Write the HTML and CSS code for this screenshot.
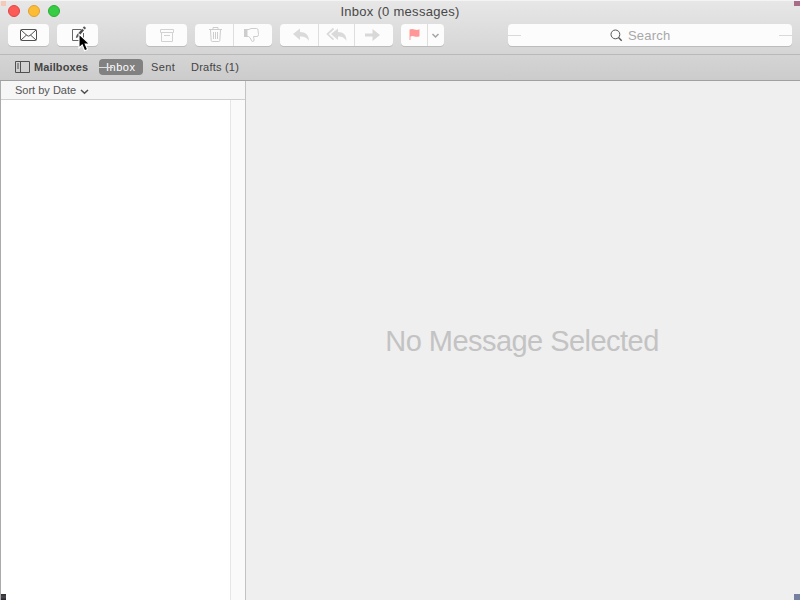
FILE: index.html
```html
<!DOCTYPE html>
<html lang="en">
<head>
<meta charset="utf-8">
<title>Inbox (0 messages)</title>
<link rel="stylesheet" href="styles.css">
</head>
<body>
<div class="window">
  <header class="chrome">
    <div class="titlebar">
      <div class="lights"><i class="light close"></i><i class="light minimize"></i><i class="light zoom"></i></div>
      <h1 class="title">Inbox (0 messages)</h1>
    </div>
    <div class="toolbar">
      <div class="group mail"><button class="btn"><svg width="41" height="22" viewBox="0 0 41 22" fill="none" stroke="#505050"><rect x="12.5" y="5.500" width="16" height="11" rx="1"/><path d="M13 6l6 5.500q1.500 1.200 3 0L28 6M13 16l5.500-5M28 16l-5.500-5"/></svg></button></div>
      <div class="group compose"><button class="btn"><svg width="41" height="22" viewBox="0 0 41 22" fill="none"><path d="M24 5.500h-8.500v11h11V9" stroke="#666"/><path d="M20.500 12l5.600-6.500" stroke="#4c4c4c" stroke-width="2.600"/><path d="M26.800 4.700l1.300-1.500" stroke="#555" stroke-width="2.600"/><path d="M18.800 14l.8-2.700 1.900 1.700z" fill="#4c4c4c"/></svg></button></div>
      <div class="group archive"><button class="btn"><svg width="41" height="22" viewBox="0 0 41 22" fill="none" stroke="#d2d2d2"><path d="M14.500 5.500h13v3h-13zM15.500 8.500v9h11v-9M18 11.500h6"/></svg></button></div>
      <div class="group trash"><button class="btn"><svg width="38" height="22" viewBox="0 0 38 22" fill="none" stroke="#cdcdcd"><path d="M14 5.500h13M18 5V3.500h5V5M15.500 6l.7 10.500q.1 1 1.100 1h6.400q1 0 1.100-1L25.500 6M18.500 8v7M20.500 8v7M22.500 8v7"/></svg></button><button class="btn"><svg width="38" height="22" viewBox="0 0 38 22" fill="none" stroke="#cdcdcd"><path d="M10 5h3.500v8H10z" fill="#cdcdcd" stroke="none"/><path d="M13 5.500h2l2-1h5.500q1.500 0 1.500 1.500l.5 4.500q0 2-1.500 2h-3.500q.5 2 .5 3.500 0 1.500-1.300 1.500-1 0-1.400-1.300-.8-2.700-2.800-3.700H13"/></svg></button></div>
      <div class="group reply"><button class="btn"><svg width="38" height="22" viewBox="0 0 38 22"><path fill="#dadada" d="M13 10l7-5.500v3.500c5.500 0 9 3 9 9-2-3.300-4.500-4.500-9-4.500V16z"/></svg></button><button class="btn"><svg width="35" height="22" viewBox="0 0 35 22"><path fill="#dadada" d="M12 10l7-5.500v3.500c5.500 0 8.500 3 8.500 9-2-3.300-4.200-4.500-8.500-4.500V16z"/><path d="M14.500 4.500L8.500 10l6 5.700" fill="none" stroke="#dadada" stroke-width="1.700"/></svg></button><button class="btn"><svg width="38" height="22" viewBox="0 0 38 22"><path fill="#d8d8d8" d="M10 9.500h7.500V5l7.500 6-7.500 6v-4.500h-7.500z"/></svg></button></div>
      <div class="group flag"><button class="btn"><svg width="26" height="22" viewBox="0 0 26 22"><path fill="#ff9797" d="M8.500 5.500q2.500-1 5 0t5-.3v7q-2.500 1-5 .2t-4 0V16h-1z"/></svg></button><button class="btn"><svg width="16" height="22" viewBox="0 0 16 22" fill="none" stroke="#a4a4a4" stroke-width="1.500"><path d="M4.500 10l3 3 3-3"/></svg></button></div>
      <div class="search"><svg width="13" height="13" viewBox="0 0 13 13" fill="none" stroke="#555"><circle cx="5.400" cy="5.400" r="4.400"/><path d="M8.500 8.500l3.200 3.200" stroke-width="1.400"/></svg><span class="placeholder">Search</span></div>
    </div>
    <nav class="favorites">
      <svg class="panel" width="15" height="12" viewBox="0 0 15 12" fill="none" stroke="#505050"><path d="M.5.500h14v11H.5zM5.500 1v10M2 3h2M2 5h2M2 7h2"/></svg>
      <span class="fav mailboxes">Mailboxes</span>
      <span class="fav inbox"><span class="fav-text">Inbox</span></span>
      <span class="fav sent">Sent</span>
      <span class="fav drafts">Drafts (1)</span>
    </nav>
  </header>
  <main class="content">
    <aside class="list">
      <div class="sort"><span class="sort-text">Sort by Date</span><svg class="chevron" width="9" height="6" viewBox="0 0 9 6" fill="none" stroke="#505050" stroke-width="1.500"><path d="M1 1l3.500 3.300L8 1"/></svg></div>
      <div class="rows"><div class="scroller"></div></div>
    </aside>
    <section class="viewer"><p class="empty">No Message Selected</p></section>
  </main>
  <i class="corner tl"></i><i class="corner tr"></i><i class="corner bl"></i><i class="corner br"></i>
  <svg class="cursor" width="13" height="20" viewBox="0 0 13 20"><path d="M1 1v14l3.200-3 2.400 5.700 3-1.200-2.400-5.500h4.500z" fill="#000" stroke="#fff" stroke-width="1.100"/></svg>
</div>
</body>
</html>
```

FILE: styles.css
```css
* { box-sizing: border-box; }
body { margin: 0; font-family: "Liberation Sans", Arial, sans-serif; }
.window { position: relative; width: 800px; height: 600px; overflow: hidden; display: flex; flex-direction: column; }
.chrome { height: 81px; flex: none; background: linear-gradient(#e7e7e7, #cccccc); border-top: 1px solid #f4f4f4; border-bottom: 1px solid #a0a0a0; }
.titlebar { height: 23px; display: grid; grid-template-columns: 1fr auto 1fr; align-items: start; }
.lights { display: flex; gap: 8px; padding: 4px 0 0 8px; }
.light { width: 12px; height: 12px; border-radius: 50%; border: 1px solid; }
.close { background: #fc5b57; border-color: #df4744; }
.minimize { background: #fdbc35; border-color: #dea032; }
.zoom { background: #36cc43; border-color: #29ad35; }
.title { margin: 2px 0 0; font-size: 13px; font-weight: 400; line-height: 17px; letter-spacing: .28px; color: #484848; white-space: nowrap; }
.toolbar { height: 31px; padding: 0 8px; display: flex; align-items: flex-start; border-bottom: 1px solid #b9b9b9; }
.group, .search { height: 22px; background: #fcfcfc; border-radius: 4px; box-shadow: 0 1px 0 #bcbcbc; display: flex; flex: none; }
.group { margin-right: 8px; }
.btn { flex: none; display: block; height: 22px; padding: 0; border: 0; background: none; }
.btn svg { display: block; }
.btn + .btn { border-left: 1px solid #dedede; }
.compose { margin-right: 48px; }
.flag { margin-right: 64px; }
.search { width: 284px; align-items: center; gap: 5px; color: #a8a8a8; }
.search::before, .search::after { content: ""; width: 13px; height: 1px; background: #d9d9d9; }
.search::before { margin-right: 84px; }
.search::after { margin-left: auto; }
.placeholder { font-size: 13px; line-height: 22px; letter-spacing: .2px; padding-top: 1px; }
.favorites { height: 25px; padding: 0 0 1px 15px; display: flex; align-items: center; font-size: 11px; color: #444; }
.fav { line-height: 16px; white-space: nowrap; flex: none; }
.mailboxes { width: 55px; margin: 0 10px 0 4px; font-weight: 700; letter-spacing: .12px; }
.inbox { position: relative; width: 44px; height: 16px; margin-right: 8px; padding-left: 7px; border-radius: 4px; background: #818181; color: #fff; letter-spacing: .5px; }
.inbox::before { content: ""; position: absolute; left: 0; top: 8px; width: 14px; height: 1px; background: #dedede; }
.sent { width: 40px; letter-spacing: .4px; }
.drafts { letter-spacing: .22px; }
.content { flex: 1; min-height: 0; display: flex; }
.list { width: 246px; flex: none; display: flex; flex-direction: column; background: #fff; border-left: 1px solid #ababab; border-right: 1px solid #c3c3c3; }
.sort { height: 19px; flex: none; padding-left: 14px; display: flex; align-items: center; gap: 4px; background: #f6f6f6; border-bottom: 1px solid #cfcfcf; font-size: 11px; color: #555; }
.chevron { margin-top: 3px; }
.rows { flex: 1; display: flex; justify-content: flex-end; }
.scroller { width: 15px; background: #fafafa; border-left: 1px solid #e6e6e6; }
.viewer { flex: 1; background: #efefef; display: flex; align-items: center; justify-content: center; }
.empty { margin: 0 2px 0 0; font-size: 29px; line-height: 34px; letter-spacing: -.54px; color: #c3c3c3; white-space: nowrap; }
.corner { position: absolute; }
.tl { left: 1px; top: 1px; width: 5px; height: 5px; background: #f5c8b8; }
.tr { right: 0; top: 1px; width: 6px; height: 5px; background: #aa6b88; }
.bl { left: 1px; bottom: 0; width: 5px; height: 6px; background: linear-gradient(#2c2c34, #4b4b52, #25252c); }
.br { right: 0; bottom: 0; width: 6px; height: 6px; background: #73809f; }
.cursor { position: absolute; left: 78px; top: 33px; }
```
